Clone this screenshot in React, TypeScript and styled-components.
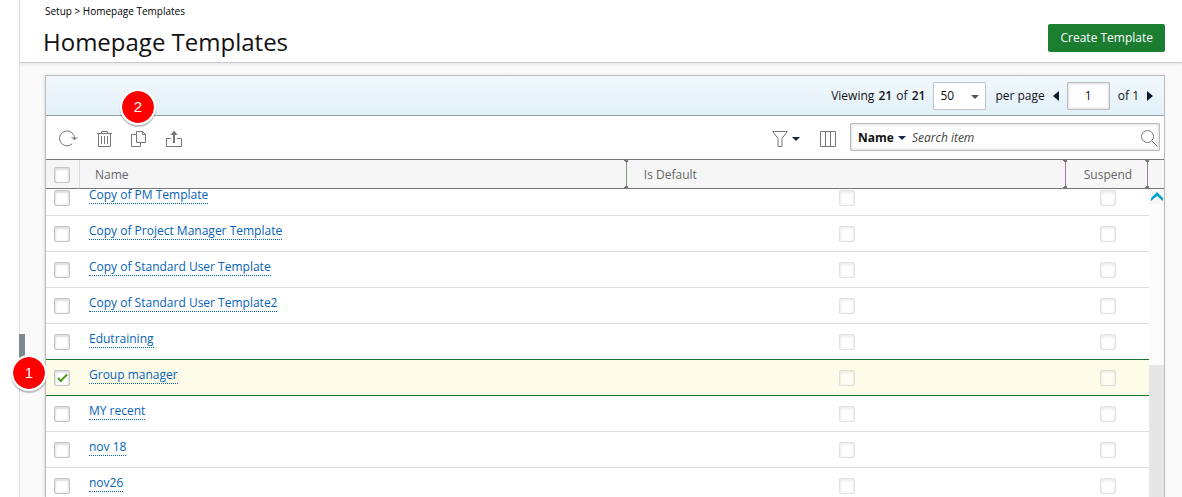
import { useLayoutEffect, useRef } from "react";
import styled, { createGlobalStyle, css } from "styled-components";

const GlobalStyle = createGlobalStyle`
  *, *::before, *::after { box-sizing: border-box; }
  html, body, #root { height: 100%; }
  body {
    margin: 0;
    overflow: hidden;
    background: #fff;
    color: #111;
    font-family: "Open Sans", "Liberation Sans", sans-serif;
    font-size: 12px;
    line-height: 16px;
  }
  button, input, select { font: inherit; color: inherit; margin: 0; }
`;

const Page = styled.div`
  position: relative;
  display: flex;
  height: 100vh;
  padding-left: 19px;
`;

const Main = styled.main`
  flex: 1;
  min-width: 0;
  display: flex;
  flex-direction: column;
  border-left: 1px solid #e0e0e0;
  background: #fafafa;
`;

const PageHeader = styled.header`
  display: flex;
  justify-content: space-between;
  align-items: flex-end;
  padding: 4px 17px 2px 23px;
  background: #fff;
  border-bottom: 1px solid #ccc;
  box-shadow: 0 1px 3px rgba(0, 0, 0, 0.1);
`;

const Breadcrumb = styled.nav`
  font-size: 10px;
  line-height: 14px;
  color: #000;
  padding-left: 2px;

  a { color: inherit; text-decoration: none; }
`;

const Title = styled.h1`
  margin: 6px 0 0;
  font-size: 24px;
  line-height: 36px;
  font-weight: 400;
`;

const PrimaryButton = styled.button`
  height: 28px;
  margin-bottom: 8px;
  padding: 0 12px;
  border: 0;
  border-radius: 2px;
  background: #1b7d30;
  color: #fff;
`;

const Panel = styled.section`
  flex: 1;
  min-height: 0;
  display: flex;
  flex-direction: column;
  margin: 12px 17px 0 25px;
  border: 1px solid #bbb;
  border-bottom: 0;
  background: #fff;
  box-shadow: -1px 0 3px rgba(0, 0, 0, 0.1);
`;

const PagerBar = styled.div`
  display: flex;
  align-items: center;
  justify-content: flex-end;
  height: 40px;
  padding-right: 11px;
  border-bottom: 1px solid #999ea3;
  background: linear-gradient(#f2f9fd, #e2f0f8);

  b { margin: 0 1px; font-weight: 600; }
`;

const PageSize = styled.span`
  position: relative;
  display: flex;
  margin: 0 9px 0 7px;

  select {
    appearance: none;
    width: 53px;
    height: 28px;
    padding: 0 6px;
    border: 1px solid #bfc4c7;
    border-radius: 1px;
    background: #fff;
  }
  svg { position: absolute; right: 7px; top: 13px; pointer-events: none; }
`;

const PageInput = styled.input`
  width: 43px;
  height: 28px;
  margin: 0 8px;
  padding: 0;
  border: 1px solid #bbb;
  border-radius: 1px;
  background: #fff;
  text-align: center;
  box-shadow: inset 0 0 3px 1px rgba(0, 0, 0, 0.12);
`;

const IconButton = styled.button`
  position: relative;
  display: flex;
  align-items: center;
  padding: 0;
  border: 0;
  background: none;
`;

const Arrow = styled(IconButton)`
  margin-left: 8px;
`;

const Toolbar = styled.div`
  display: flex;
  align-items: center;
  justify-content: space-between;
  height: 44px;
  padding: 2px 4px 0 12px;
  border-bottom: 1px solid #777;
`;

const ToolGroup = styled.div<{ $gap: number }>`
  display: flex;
  align-items: center;
  gap: ${(p) => p.$gap}px;
`;

const SearchBox = styled.div`
  display: flex;
  align-items: center;
  width: 310px;
  height: 28px;
  margin: 0 0 3px 2px;
  padding: 2px 1px 0 7px;
  border: 1px solid #bbb;
  border-radius: 1px;
  box-shadow: inset 0 0 3px 1px rgba(0, 0, 0, 0.12);

  input {
    flex: 1;
    min-width: 0;
    padding: 0;
    border: 0;
    outline: 0;
    background: none;
    font-style: italic;
  }
  input::placeholder { color: #444; opacity: 1; }
`;

const FieldButton = styled(IconButton)`
  gap: 4px;
  margin-right: 6px;
  font-weight: 700;
`;

const ListArea = styled.div`
  position: relative;
  flex: 1;
  min-height: 0;
`;

const Scroller = styled.div`
  height: 100%;
  overflow: hidden;
`;

const Table = styled.table`
  width: 100%;
  table-layout: fixed;
  border-collapse: separate;
  border-spacing: 0;
`;

const Column = styled.col<{ $width?: string }>`
  width: ${(p) => p.$width ?? "auto"};
`;

const HeadCell = styled.th<{ $pad?: number; $rule?: boolean; $center?: boolean }>`
  position: sticky;
  top: 0;
  z-index: 1;
  height: 29px;
  padding: 1px 0 0 ${(p) => p.$pad ?? 0}px;
  background: #f6f6f6;
  border-bottom: 1px solid #777;
  border-right: ${(p) => (p.$rule ? "1px solid #d9d9d9" : "0")};
  color: #666;
  font-weight: 400;
  text-align: ${(p) => (p.$center ? "center" : "left")};
`;

const Grip = styled.svg`
  position: absolute;
  z-index: 1;
  top: 0;
  right: 0;
`;

const Row = styled.tr<{ $line: "plain" | "green"; $selected?: boolean }>`
  td {
    height: 36px;
    padding: 0;
    border-bottom: 1px solid ${(p) => (p.$line === "green" ? "#1b7232" : "#ddd")};
    ${(p) => p.$selected && css`background: #fdfce9;`}
  }
`;

const CheckCell = styled.td``;

const Tick = styled.input<{ $left?: boolean }>`
  appearance: none;
  position: relative;
  display: block;
  width: 16px;
  height: 16px;
  margin: ${(p) => (p.$left ? "0 0 0 8px" : "0 auto")};
  border: 1px solid #c4c4c4;
  border-radius: 2px;
  background: #fff;
  box-shadow: inset 0 1px 2px 1px rgba(0, 0, 0, 0.13);

  &:disabled { opacity: 0.5; }
  &:checked::after {
    content: "";
    position: absolute;
    left: 5px;
    top: 1px;
    width: 5px;
    height: 10px;
    border: solid #4b9a12;
    border-width: 0 2px 2px 0;
    transform: rotate(45deg);
  }
`;

const NameCell = styled.td`
  && { padding: 0 0 5px 9px; }

  a {
    display: inline-block;
    color: #0563b8;
    text-decoration: none;
    border-bottom: 1px dotted #0563b8;
  }
`;

const Scrollbar = styled.div`
  position: absolute;
  z-index: 2;
  top: 29px;
  right: 0;
  bottom: 0;
  width: 15px;
  display: flex;
  flex-direction: column;
  background: #fcfcfc;
`;

const ScrollUp = styled.button`
  height: 15px;
  padding: 0;
  border: 0;
  background: #f6f6f6;
  display: flex;
  justify-content: center;
  align-items: center;
`;

const Thumb = styled.div`
  flex: 1;
  margin-top: 161px;
  background: #e6e6e6;
`;

const CollapseHandle = styled.div`
  position: absolute;
  left: 19px;
  top: 334px;
  width: 6px;
  height: 24px;
  background: #7f8790;
`;

const Badge = styled.span<{ $x: number; $y: number }>`
  position: absolute;
  z-index: 3;
  left: ${(p) => p.$x}px;
  top: ${(p) => p.$y}px;
  width: 36px;
  height: 36px;
  border: 2px solid #fff;
  border-radius: 50%;
  background: #f00;
  background-clip: padding-box;
  box-shadow: 0 2px 1px rgba(0, 0, 0, 0.25);
  color: #fff;
  font: 15px/32px "Liberation Sans", sans-serif;
  text-align: center;
`;

const stroke = { fill: "none", stroke: "#777", strokeWidth: 1 };

const Caret = ({ color = "#16294a" }: { color?: string }) => (
  <svg width="8" height="4" viewBox="0 0 8 4"><path d="M0 0h8L4 4z" fill={color} /></svg>
);

const ResizeGrip = ({ color }: { color: string }) => (
  <Grip width="5" height="28" viewBox="0 0 5 28">
    <path d="M3.500 0v28" stroke={color} />
    <path d="M1 0h4v1H1zM2 1h3v1H2zM1 28h4v-1H1zM2 27h3v-1H2z" fill="#777" />
  </Grip>
);

const names = [
  "Copy of PM Template",
  "Copy of Project Manager Template",
  "Copy of Standard User Template",
  "Copy of Standard User Template2",
  "Edutraining",
  "Group manager",
  "MY recent",
  "nov 18",
  "nov26",
];
const selected = 5;

export default function App() {
  const scroller = useRef<HTMLDivElement>(null);
  useLayoutEffect(() => {
    if (scroller.current) scroller.current.scrollTop = 9;
  }, []);

  return (
    <>
      <GlobalStyle />
      <Page>
        <Main>
          <PageHeader>
            <div>
              <Breadcrumb aria-label="Breadcrumb">
                <a href="#setup">Setup</a> &gt; <a href="#templates">Homepage Templates</a>
              </Breadcrumb>
              <Title>Homepage Templates</Title>
            </div>
            <PrimaryButton>Create Template</PrimaryButton>
          </PageHeader>

          <Panel>
            <PagerBar>
              <span>Viewing <b>21</b> of <b>21</b></span>
              <PageSize>
                <select aria-label="Items per page" defaultValue="50">
                  <option>50</option>
                </select>
                <Caret color="#555" />
              </PageSize>
              <span>per page</span>
              <Arrow aria-label="Previous page">
                <svg width="6" height="10" viewBox="0 0 6 10"><path d="M6 0v10L0 5z" fill="#0b1a2b" /></svg>
              </Arrow>
              <PageInput aria-label="Page" defaultValue="1" />
              <span>of 1</span>
              <Arrow aria-label="Next page">
                <svg width="6" height="10" viewBox="0 0 6 10"><path d="M0 0v10L6 5z" fill="#0b1a2b" /></svg>
              </Arrow>
            </PagerBar>

            <Toolbar>
              <ToolGroup $gap={17}>
                <IconButton aria-label="Refresh">
                  <svg width="21" height="18" viewBox="0 0 21 18" {...stroke}>
                    <path d="M14.200 13.800A7.500 7.500 0 1 1 16.500 9" />
                    <path d="M13.500 7l3 3 3-3" />
                    <path d="M14.500 7.500h4l-2 2z" fill="#777" stroke="none" />
                  </svg>
                </IconButton>
                <IconButton aria-label="Delete">
                  <svg width="18" height="18" viewBox="0 0 18 18" {...stroke}>
                    <path d="M1 3.500h15M5.500 3.500v-2h6v2M2.500 3.500v13h12v-13M5.500 6v8M8.500 6v8M11.500 6v8" />
                  </svg>
                </IconButton>
                <IconButton aria-label="Copy">
                  <svg width="18" height="18" viewBox="0 0 18 18" {...stroke}>
                    <path d="M5.500 1.500h6l3 3v8h-9zM11.500 1.500v3h3M5.500 4.500h-5v12h9v-4" />
                  </svg>
                  <Badge $x={-11} $y={-41}>2</Badge>
                </IconButton>
                <IconButton aria-label="Export">
                  <svg width="18" height="18" viewBox="0 0 18 18" {...stroke}>
                    <path d="M5 8.500H.500v8h15v-8H11" />
                    <path d="M8 13V3" strokeWidth="2" />
                    <path d="M4.500 5L8 .500 11.500 5z" fill="#777" stroke="none" />
                  </svg>
                </IconButton>
              </ToolGroup>
              <ToolGroup $gap={11}>
                <ToolGroup $gap={20}>
                  <IconButton aria-label="Filter">
                    <svg width="20" height="18" viewBox="0 0 20 18" {...stroke}>
                      <path d="M.700 1.500h14.600L10 8.500v8H6v-8z" />
                    </svg>
                    <Caret />
                  </IconButton>
                  <IconButton aria-label="Columns">
                    <svg width="17" height="18" viewBox="0 0 17 18" {...stroke}>
                      <path d="M.500 1.500h15v15H.500zM5.500 1.500v15M10.500 1.500v15" />
                    </svg>
                  </IconButton>
                </ToolGroup>
                <SearchBox>
                  <FieldButton>Name <Caret /></FieldButton>
                  <input aria-label="Search item" placeholder="Search item" />
                  <IconButton aria-label="Search">
                    <svg width="17" height="17" viewBox="0 0 17 17" {...stroke}>
                      <circle cx="6.500" cy="6.500" r="6" />
                      <path d="M10.800 10.800l5.700 5.700" />
                    </svg>
                  </IconButton>
                </SearchBox>
              </ToolGroup>
            </Toolbar>

            <ListArea>
              <Scroller ref={scroller}>
                <Table>
                  <colgroup>
                    <Column $width="34px" />
                    <Column $width="49%" />
                    <Column />
                    <Column $width="82px" />
                    <Column $width="15px" />
                  </colgroup>
                  <thead>
                    <tr>
                      <HeadCell $rule><Tick type="checkbox" $left aria-label="Select all" /></HeadCell>
                      <HeadCell $pad={15}>Name<ResizeGrip color="#7f9a78" /></HeadCell>
                      <HeadCell $pad={16}>Is Default<ResizeGrip color="#a07aa0" /></HeadCell>
                      <HeadCell $center>Suspend<ResizeGrip color="#a07aa0" /></HeadCell>
                      <HeadCell as="td" />
                    </tr>
                  </thead>
                  <tbody>
                    {names.map((name, i) => (
                      <Row
                        key={name}
                        $selected={i === selected}
                        $line={i === selected || i === selected - 1 ? "green" : "plain"}
                      >
                        <CheckCell>
                          <Tick type="checkbox" $left defaultChecked={i === selected} aria-label={`Select ${name}`} />
                        </CheckCell>
                        <NameCell><a href="#template">{name}</a></NameCell>
                        <CheckCell><Tick type="checkbox" disabled aria-label={`${name} is default`} /></CheckCell>
                        <CheckCell><Tick type="checkbox" disabled aria-label={`${name} suspended`} /></CheckCell>
                        <td />
                      </Row>
                    ))}
                  </tbody>
                </Table>
              </Scroller>
              <Scrollbar>
                <ScrollUp aria-label="Scroll up">
                  <svg width="12" height="9" viewBox="0 0 12 9">
                    <path d="M6 0l6 6v3L6 4 0 9V6z" fill="#0aa0c8" />
                  </svg>
                </ScrollUp>
                <Thumb />
              </Scrollbar>
            </ListArea>
          </Panel>
        </Main>
        <CollapseHandle />
        <Badge $x={11} $y={355}>1</Badge>
      </Page>
    </>
  );
}
